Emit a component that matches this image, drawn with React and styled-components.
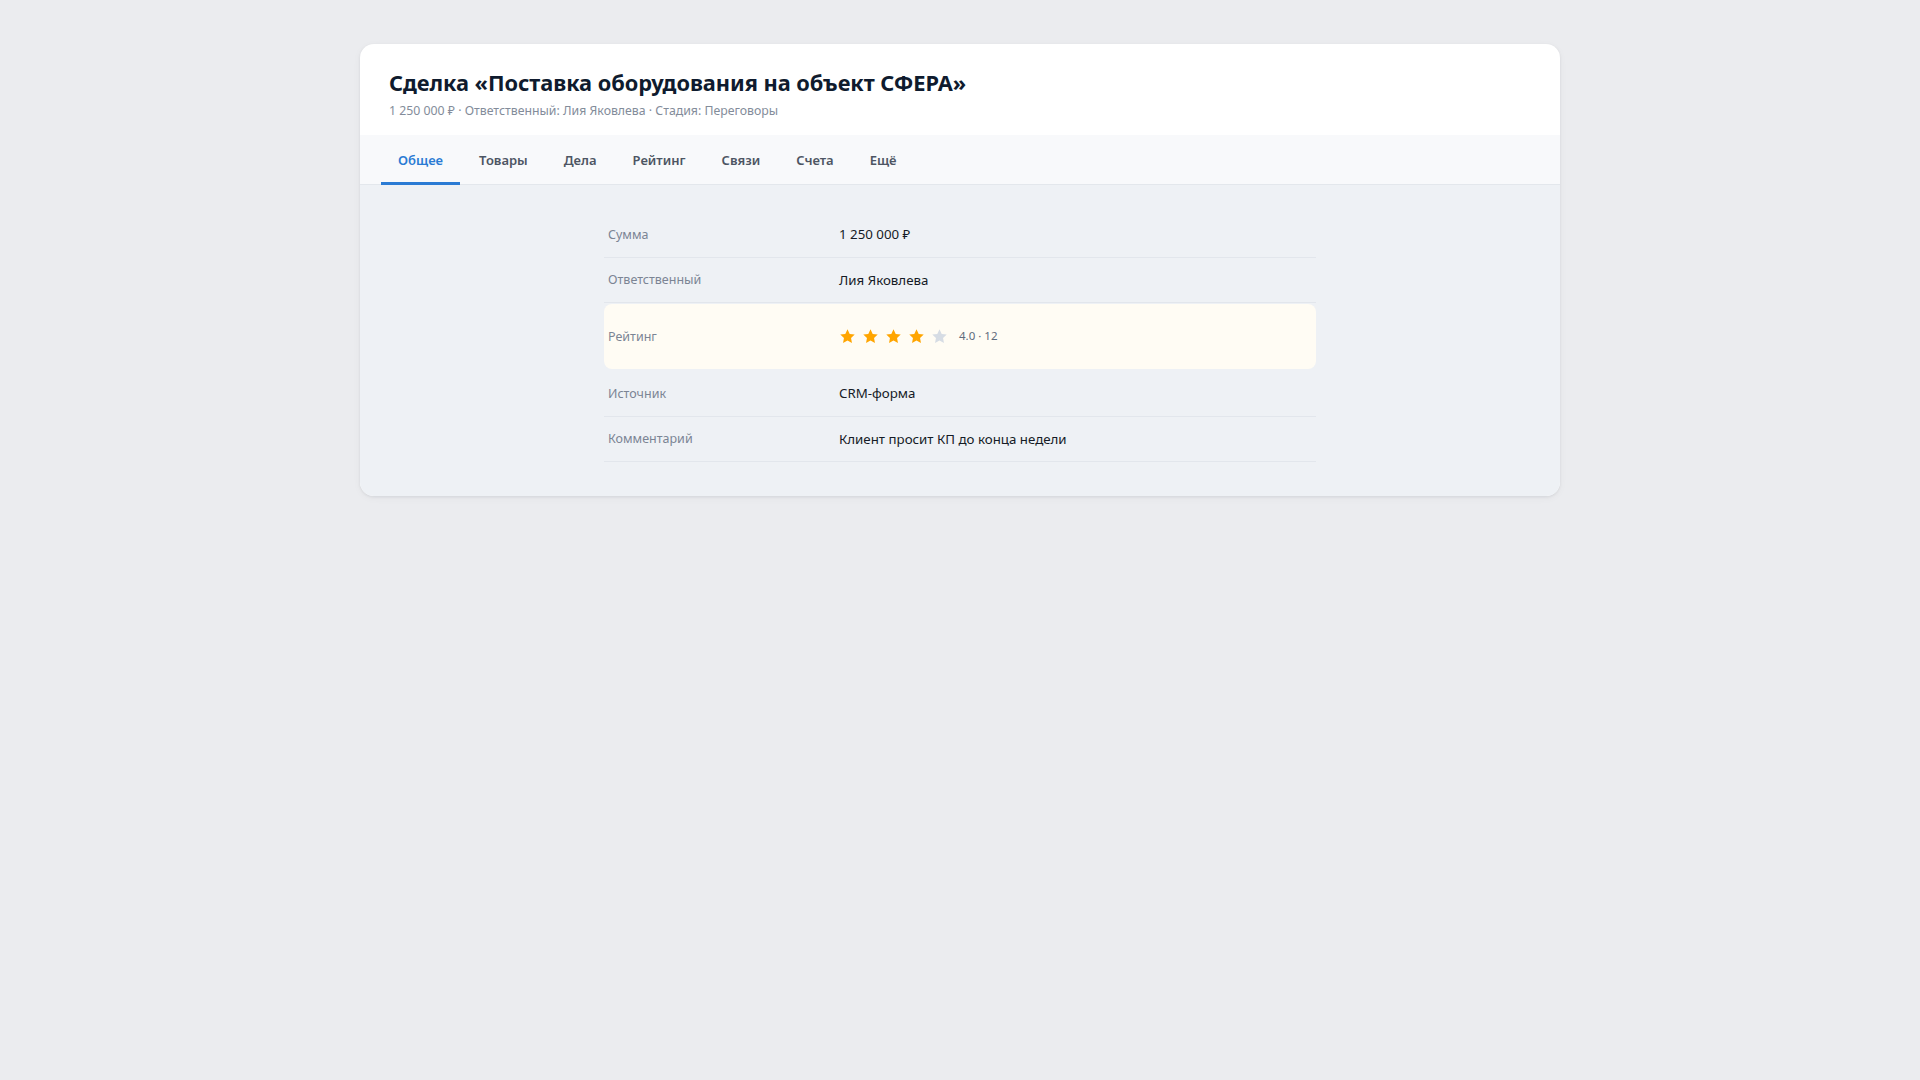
import React from "react";
import styled, { createGlobalStyle } from "styled-components";

const Global = createGlobalStyle`
  html, body { margin: 0; padding: 0; background: #ebecef; }
  body { font-family: "Noto Sans", "Open Sans", sans-serif; color: #111827; }
  * { box-sizing: border-box; }
`;

const Page = styled.div`
  min-height: 1080px;
  padding: 44px 0;
  display: flex;
  justify-content: center;
  align-items: flex-start;
`;

const Card = styled.div`
  width: 1200px;
  background: #ffffff;
  border-radius: 14px;
  overflow: hidden;
  box-shadow: 0 1px 3px rgba(15, 23, 42, 0.08), 0 2px 8px rgba(15, 23, 42, 0.04);
`;

const Header = styled.div`
  padding: 24px 28px 16px 29px;
  display: flex;
  flex-direction: column;
  gap: 5px;
`;

const Title = styled.h1`
  margin: 0;
  font-size: 21.8px;
  line-height: 29px;
  font-weight: 700;
  color: #0f1b2e;
  letter-spacing: -0.05px;
`;

const Meta = styled.div`
  font-size: 12.3px;
  line-height: 17px;
  color: #838c9a;
`;

const TabBar = styled.div`
  display: flex;
  gap: 2px;
  padding: 0 21px;
  height: 50px;
  background: #f8f9fb;
  border-bottom: 1px solid #e3e7ec;
`;

const Tab = styled.div`
  display: flex;
  align-items: center;
  padding: 0 17px;
  font-size: 13px;
  font-weight: 600;
  color: ${(p) => (p.$active ? "#2a7bd4" : "#4d5563")};
  border-bottom: 3px solid ${(p) => (p.$active ? "#2a7bd4" : "transparent")};
  padding-top: 3px;
  margin-bottom: -1px;
`;

const Body = styled.div`
  background: #eef1f5;
  padding: 27px 0 34px;
  display: flex;
  justify-content: center;
`;

const List = styled.div`
  width: 712px;
  display: flex;
  flex-direction: column;
`;

const Row = styled.div`
  display: grid;
  grid-template-columns: 231px 1fr;
  align-items: center;
  padding: 0 4px;
  height: ${(p) => (p.$highlight ? "65px" : "45.5px")};
  border-bottom: 1px solid ${(p) => (p.$highlight ? "transparent" : "#e2e6ec")};
  background: ${(p) => (p.$highlight ? "#fffcf4" : "transparent")};
  border-radius: ${(p) => (p.$highlight ? "8px" : "0")};
  margin: ${(p) => (p.$highlight ? "1px 0 2px" : "0")};
`;

const Label = styled.div`
  font-size: 12.5px;
  line-height: 18px;
  padding-top: 1px;
  color: #7b8494;
`;

const Value = styled.div`
  font-size: 13.3px;
  line-height: 18px;
  color: #151b26;
  display: flex;
  align-items: center;
`;

const Stars = styled.div`
  display: flex;
  gap: 6px;
  align-items: center;
  margin-right: 11px;
`;

const Score = styled.span`
  font-size: 11.5px;
  color: #5f6b7c;
`;

const Star = ({ filled }) => (
  <svg width="17" height="17" viewBox="0 0 24 24">
    <path
      d="M12 1.8l3.1 6.5 7.1.9-5.2 4.9 1.3 7.1L12 17.8l-6.3 3.4L7 14.1 1.8 9.2l7.1-.9z"
      fill={filled ? "#ffa500" : "#d6dce4"}
    />
  </svg>
);

const tabs = ["Общее", "Товары", "Дела", "Рейтинг", "Связи", "Счета", "Ещё"];

export default function App() {
  return (
    <>
      <Global />
      <Page>
        <Card>
          <Header>
            <Title>Сделка «Поставка оборудования на объект СФЕРА»</Title>
            <Meta>1 250 000 ₽ · Ответственный: Лия Яковлева · Стадия: Переговоры</Meta>
          </Header>
          <TabBar>
            {tabs.map((t, i) => (
              <Tab key={t} $active={i === 0}>
                {t}
              </Tab>
            ))}
          </TabBar>
          <Body>
            <List>
              <Row>
                <Label>Сумма</Label>
                <Value>1 250 000 ₽</Value>
              </Row>
              <Row>
                <Label>Ответственный</Label>
                <Value>Лия Яковлева</Value>
              </Row>
              <Row $highlight>
                <Label>Рейтинг</Label>
                <Value>
                  <Stars>
                    {[1, 2, 3, 4, 5].map((n) => (
                      <Star key={n} filled={n <= 4} />
                    ))}
                  </Stars>
                  <Score>4.0 · 12</Score>
                </Value>
              </Row>
              <Row>
                <Label>Источник</Label>
                <Value>CRM-форма</Value>
              </Row>
              <Row>
                <Label>Комментарий</Label>
                <Value>Клиент просит КП до конца недели</Value>
              </Row>
            </List>
          </Body>
        </Card>
      </Page>
    </>
  );
}
